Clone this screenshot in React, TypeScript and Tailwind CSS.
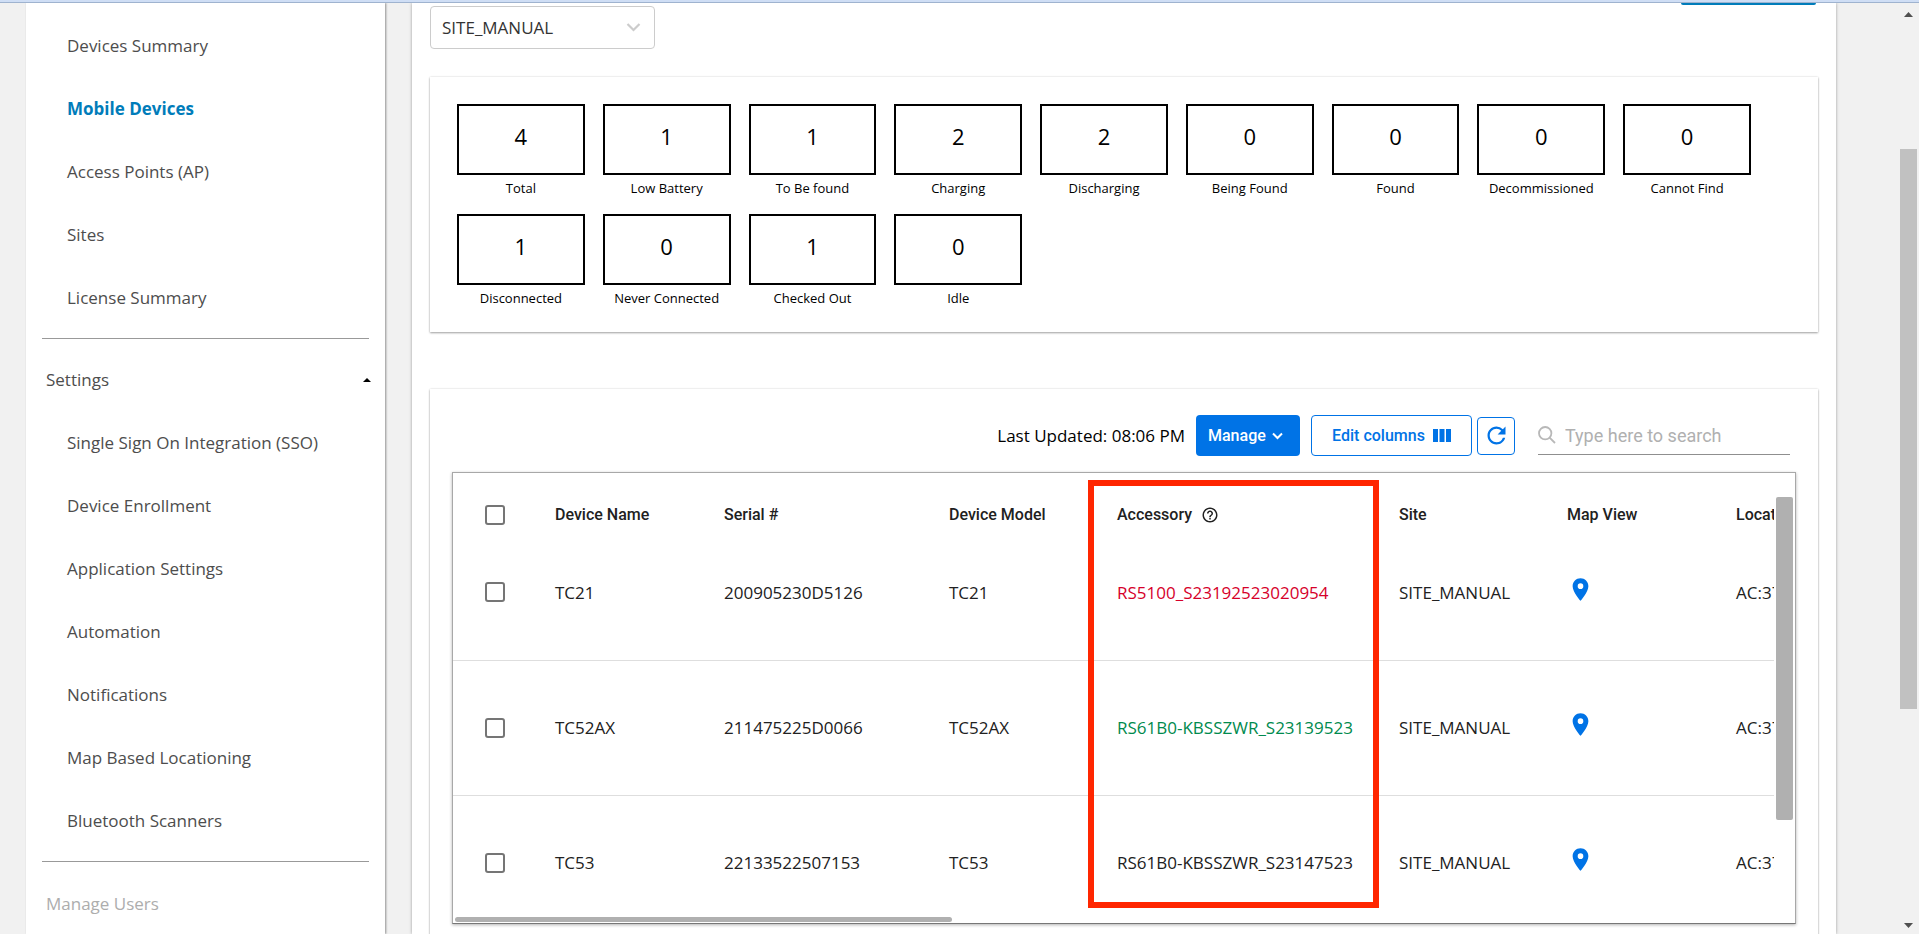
import React from "react";
import { MdHelpOutline, MdLocationOn, MdRefresh } from "react-icons/md";

const mainLinks = ["Devices Summary", "Mobile Devices", "Access Points (AP)", "Sites", "License Summary"];

const settingsLinks = [
  "Single Sign On Integration (SSO)",
  "Device Enrollment",
  "Application Settings",
  "Automation",
  "Notifications",
  "Map Based Locationing",
  "Bluetooth Scanners",
];

const stats: [string, number][] = [
  ["Total", 4],
  ["Low Battery", 1],
  ["To Be found", 1],
  ["Charging", 2],
  ["Discharging", 2],
  ["Being Found", 0],
  ["Found", 0],
  ["Decommissioned", 0],
  ["Cannot Find", 0],
  ["Disconnected", 1],
  ["Never Connected", 0],
  ["Checked Out", 1],
  ["Idle", 0],
];

const devices = [
  { name: "TC21", serial: "200905230D5126", model: "TC21", accessory: "RS5100_S23192523020954", tone: "text-[#d6002a]" },
  { name: "TC52AX", serial: "211475225D0066", model: "TC52AX", accessory: "RS61B0-KBSSZWR_S23139523", tone: "text-[#008a4e]" },
  { name: "TC53", serial: "22133522507153", model: "TC53", accessory: "RS61B0-KBSSZWR_S23147523", tone: "text-[#212121]" },
];

const cardShadow = "shadow-[0_1px_2px_rgba(0,0,0,0.35),0_0_2px_rgba(0,0,0,0.12)]";

function NavLink({ label, active }: { label: string; active?: boolean }) {
  return (
    <a
      href="#"
      className={
        active
          ? "flex h-[63px] items-center pl-[25px] font-bold text-[#007cba]"
          : "flex h-[63px] items-center pl-[25px] text-[#4d4d4d]"
      }
    >
      {label}
    </a>
  );
}

function Sidebar() {
  return (
    <nav className="w-[359px] shrink-0 bg-white px-4 pt-[11px] text-[17px] shadow-[1px_0_2px_rgba(0,0,0,0.4)]">
      {mainLinks.map((label) => (
        <NavLink key={label} label={label} active={label === "Mobile Devices"} />
      ))}
      <hr className="mt-[9px] border-[#999999]" />
      <button type="button" className="mt-[9px] flex h-[63px] w-full items-center justify-between pl-1 text-[#4d4d4d]">
        Settings
        <svg className="-mr-[2px] h-[4px] w-[8px]" viewBox="0 0 8 4" aria-hidden="true">
          <path d="M0 4 4 0l4 4z" fill="#000" />
        </svg>
      </button>
      {settingsLinks.map((label) => (
        <NavLink key={label} label={label} />
      ))}
      <hr className="mt-[9px] border-[#999999]" />
      <a href="#" className="mt-[10px] flex h-[63px] items-center pl-1 text-[#adadad]">
        Manage Users
      </a>
    </nav>
  );
}

function StatsCard() {
  return (
    <section className={`mt-[28px] bg-white pt-[27px] pr-[67px] pb-2 pl-[27px] ${cardShadow}`}>
      <ul className="grid grid-cols-9 gap-x-[18px]">
        {stats.map(([label, value]) => (
          <li key={label} className="h-[110px] text-center whitespace-nowrap text-black">
            <div className="flex h-[71px] items-center justify-center border-2 border-black pb-[7px] text-[22px]">
              {value}
            </div>
            <div className="mt-[2px] text-[13px] leading-[22px]">{label}</div>
          </li>
        ))}
      </ul>
    </section>
  );
}

function Toolbar() {
  return (
    <div className="flex h-[41px] items-center justify-end pr-[6px] text-[16px]">
      <span className="mr-[11px] text-[17px] text-black">Last Updated: 08:06 PM</span>
      <button
        type="button"
        className="mr-[11px] flex h-[41px] w-[104px] items-center gap-[6px] rounded-[4px] bg-[#0073e6] pl-[12px] font-[Roboto,sans-serif] font-medium text-white"
      >
        Manage
        <svg className="h-[8px] w-[11px]" viewBox="0 0 11 8" fill="none" stroke="#fff" strokeWidth="2" aria-hidden="true">
          <path d="m1 1.5 4.5 4.5L10 1.5" />
        </svg>
      </button>
      <button
        type="button"
        className="mr-[5px] flex h-[41px] w-[161px] items-center justify-center gap-[8px] rounded-[4px] border border-[#0073e6] font-[Roboto,sans-serif] font-medium text-[#0073e6]"
      >
        Edit columns
        <svg className="h-[13px] w-[18px]" viewBox="0 0 18 13" fill="#0073e6" aria-hidden="true">
          <path d="M0 0h5v13H0zM6.500 0h5v13h-5zM13 0h5v13h-5z" />
        </svg>
      </button>
      <button
        type="button"
        aria-label="Refresh"
        className="mr-[23px] flex size-[38px] items-center justify-center rounded-[4px] border border-[#0073e6] text-[#0073e6]"
      >
        <MdRefresh size={27} />
      </button>
      <label className="flex h-[38px] w-[252px] items-center gap-[9px] border-b border-[#8f8f8f]">
        <svg className="size-[18px] shrink-0" viewBox="0 0 18 18" fill="none" stroke="#b8b8b8" strokeWidth="1.8" aria-hidden="true">
          <circle cx="7.200" cy="7.200" r="6.200" />
          <path d="m11.600 11.600 5.400 5.400" />
        </svg>
        <input
          type="search"
          aria-label="Search devices"
          placeholder="Type here to search"
          className="w-full min-w-0 bg-transparent font-[Roboto,sans-serif] text-[18px] outline-none placeholder:text-[#b0b0b0]"
        />
      </label>
    </div>
  );
}

function Check({ label }: { label: string }) {
  return (
    <input
      type="checkbox"
      aria-label={label}
      className="block size-[20px] appearance-none rounded-[3px] border-2 border-[#757575] bg-white"
    />
  );
}

function DeviceTable() {
  return (
    <div className="relative mt-[16px] h-[452px] border border-[#a8a8a8] border-b-[#777777] bg-white shadow-[0_1px_3px_rgba(0,0,0,0.3)]">
      <div className="mr-[21px] h-full overflow-hidden">
        <table className="w-[1434px] table-fixed border-collapse text-left text-[#212121]">
          <colgroup>
            <col className="w-[84px]" />
            <col className="w-[169px]" />
            <col className="w-[225px]" />
            <col className="w-[168px]" />
            <col className="w-[282px]" />
            <col className="w-[168px]" />
            <col className="w-[169px]" />
            <col className="w-[169px]" />
          </colgroup>
          <thead className="font-[Roboto,sans-serif] text-[16px] leading-[20px]">
            <tr className="h-[52px] align-bottom">
              <th className="pl-[32px]">
                <Check label="Select all devices" />
              </th>
              <th className="px-[18px] font-medium">Device Name</th>
              <th className="px-[18px] font-medium">Serial #</th>
              <th className="px-[18px] font-medium">Device Model</th>
              <th className="px-[18px] font-medium">
                <span className="flex items-center gap-[9px]">
                  Accessory
                  <MdHelpOutline size={18} />
                </span>
              </th>
              <th className="px-[18px] font-medium">Site</th>
              <th className="px-[18px] font-medium">Map View</th>
              <th className="px-[18px] font-medium">Location</th>
            </tr>
          </thead>
          <tbody className="text-[17px]">
            {devices.map((device) => (
              <tr key={device.name} className="h-[135px] border-b border-[#dedede] whitespace-nowrap">
                <td className="pl-[32px]">
                  <Check label={`Select ${device.name}`} />
                </td>
                <td className="px-[18px]">{device.name}</td>
                <td className="px-[18px]">{device.serial}</td>
                <td className="px-[18px]">{device.model}</td>
                <td className="px-[18px]">
                  <div className={`overflow-hidden ${device.tone}`}>{device.accessory}</div>
                </td>
                <td className="px-[18px]">SITE_MANUAL</td>
                <td className="px-[18px] pb-[6px]">
                  <a href="#" aria-label={`Show ${device.name} on map`} className="inline-block align-middle text-[#0073e6]">
                    <MdLocationOn size={27} />
                  </a>
                </td>
                <td className="px-[18px]">AC:37</td>
              </tr>
            ))}
          </tbody>
        </table>
      </div>
      <div className="absolute top-[24px] right-[2px] h-[323px] w-[17px] rounded-[2px] bg-[#b0b0b0]" />
      <div className="absolute bottom-[1px] left-[2px] h-[5px] w-[497px] rounded-full bg-[#b0b0b0]" />
      <div className="absolute top-[7px] left-[635px] h-[428px] w-[291px] border-[6px] border-[#ff2600]" />
    </div>
  );
}

export default function App() {
  return (
    <div className="flex h-screen flex-col overflow-hidden bg-[#f1f1f1] font-['Open_Sans',sans-serif]">
      <div className="h-[3px] shrink-0 border-b border-[#9fb3cf] bg-[#cfdef5]" />
      <div className="flex min-h-0 flex-1 items-stretch">
        <div className="flex min-w-0 flex-1 gap-[27px] overflow-hidden pr-[64px] pl-[26px]">
          <Sidebar />
          <main className="min-w-0 flex-1 bg-white px-[18px] shadow-[0_0_3px_rgba(0,0,0,0.35)]">
            <div className="flex h-[46px] items-start justify-between pr-[2px]">
              <label className="relative mt-[3px] block">
                <select
                  aria-label="Site"
                  className="h-[43px] w-[225px] appearance-none rounded-[4px] border border-[#cccccc] bg-white pl-[11px] text-[17px] text-[#333333]"
                >
                  <option>SITE_MANUAL</option>
                </select>
                <svg
                  className="pointer-events-none absolute top-[17px] right-[14px] h-[9px] w-[15px]"
                  viewBox="0 0 15 9"
                  fill="none"
                  stroke="#cccccc"
                  strokeWidth="2.200"
                  aria-hidden="true"
                >
                  <path d="m1.500 1 6 6 6-6" />
                </svg>
              </label>
              <div className="h-[2px] w-[135px] rounded-b-[2px] bg-[#007cba]" />
            </div>
            <StatsCard />
            <section className={`mt-[57px] bg-white px-[22px] pt-[26px] pb-[40px] ${cardShadow}`}>
              <Toolbar />
              <DeviceTable />
            </section>
          </main>
        </div>
        <div className="mr-[2px] flex w-[17px] shrink-0 flex-col items-center justify-between pt-[9px] pb-[6px]">
          <svg className="h-[5px] w-[9px] shrink-0" viewBox="0 0 9 5" aria-hidden="true">
            <path d="M0 5 4.500 0 9 5z" fill="#505050" />
          </svg>
          <div className="mt-[132px] mb-auto h-[560px] w-full bg-[#c1c1c1]" />
          <svg className="h-[5px] w-[9px] shrink-0" viewBox="0 0 9 5" aria-hidden="true">
            <path d="M0 0h9L4.500 5z" fill="#505050" />
          </svg>
        </div>
      </div>
    </div>
  );
}
